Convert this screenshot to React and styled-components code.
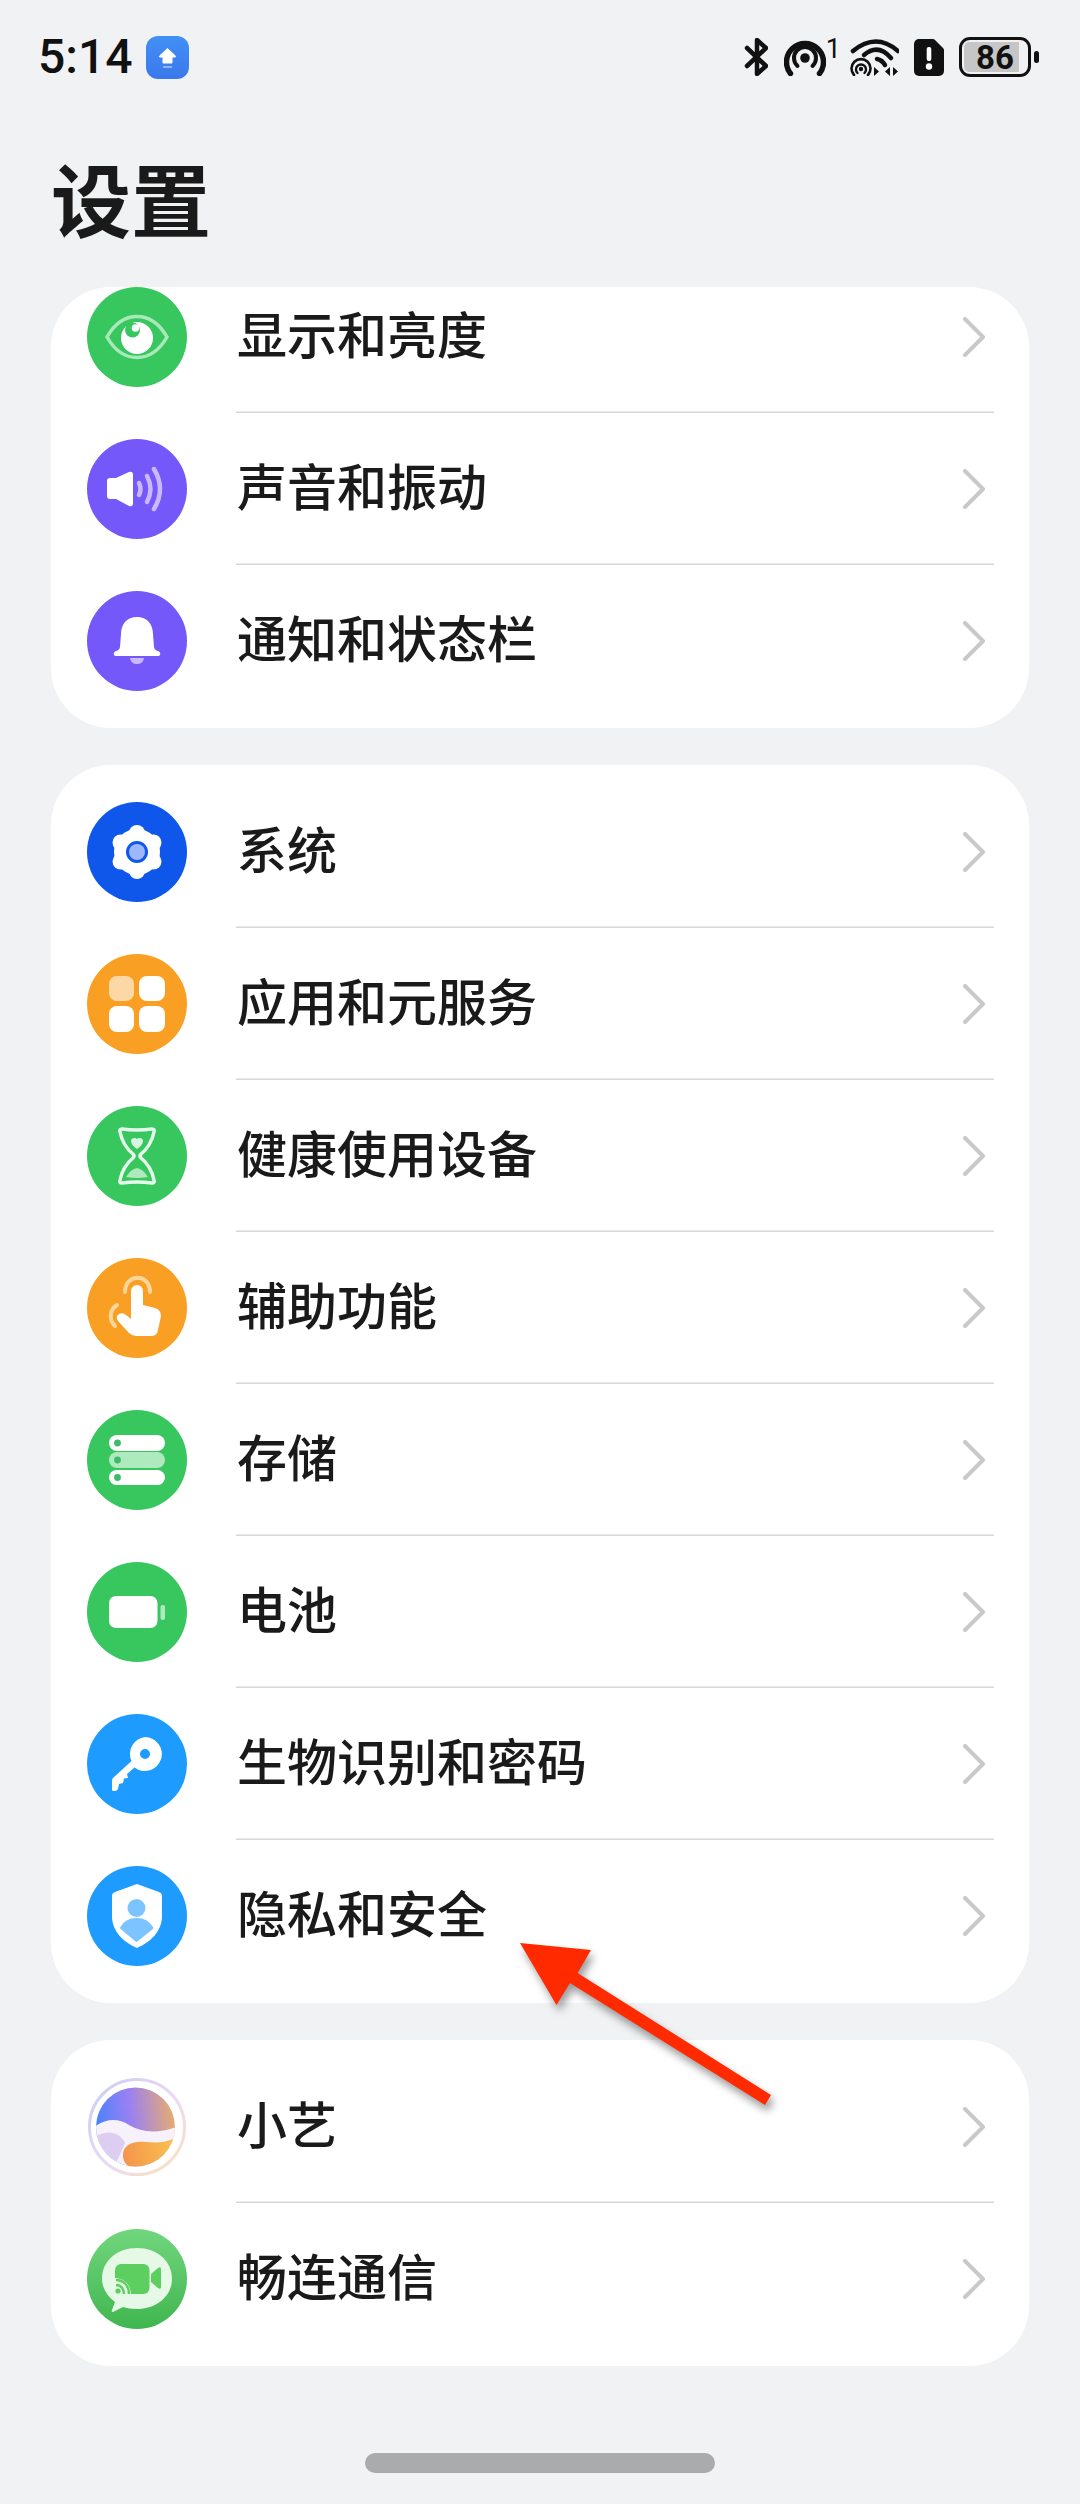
import styled, { createGlobalStyle } from "styled-components";

const GlobalStyle = createGlobalStyle`
  html, body {
    margin: 0;
    padding: 0;
    background: #f1f2f4;
  }
  * {
    box-sizing: border-box;
  }
`;

const GREEN = "#38c75e";
const PURPLE = "#7558fa";
const ORANGE = "#f9a024";
const SKY = "#1e9bff";

const Page = styled.div`
  position: relative;
  width: 1080px;
  height: 2504px;
  overflow: hidden;
  display: flex;
  flex-direction: column;
  background: #f1f2f4;
  font-family: "Noto Sans CJK SC", "Noto Sans", sans-serif;
  color: #1a1a1a;
`;

const StatusBar = styled.div`
  height: 114px;
  flex-shrink: 0;
  display: flex;
  align-items: center;
  justify-content: space-between;
  padding: 0 41px 0 38px;
`;

const StatusLeft = styled.div`
  display: flex;
  align-items: center;
  gap: 13px;
`;

const Time = styled.span`
  font-family: Roboto, "Liberation Sans", sans-serif;
  font-size: 48px;
  font-weight: 500;
  line-height: 56px;
  color: #111;
`;

const StatusRight = styled.div`
  display: flex;
  align-items: center;
  gap: 15px;
`;

const Hotspot = styled.div`
  display: flex;
  align-items: flex-start;
  gap: 4px;
  margin: 0 -3px 0 1px;
`;

const SimCount = styled.span`
  margin: 0 -4px;
  font-family: Roboto, "Liberation Sans", sans-serif;
  font-size: 27px;
  line-height: 22px;
  color: #111;
`;

const Battery = styled.div`
  display: flex;
  align-items: center;
  gap: 3px;
`;

const BatteryShell = styled.div`
  width: 72px;
  height: 40px;
  border: 3.5px solid #111;
  border-radius: 11px;
  padding: 2px;
  display: flex;
`;

const BatteryLevel = styled.div`
  flex: 1;
  display: flex;
  align-items: center;
  justify-content: center;
  background: linear-gradient(to right, #c6c6c6 89%, transparent 89%);
  border-radius: 5px;
  font-family: Roboto, "Liberation Sans", sans-serif;
  font-weight: 700;
  font-size: 33px;
  line-height: 1;
  color: #111;
`;

const BatteryNub = styled.div`
  width: 5px;
  height: 12px;
  border-radius: 3px;
  background: #111;
`;

const Title = styled.h1`
  margin: 0;
  height: 173px;
  flex-shrink: 0;
  padding-left: 51px;
  font-size: 80px;
  font-weight: 700;
  line-height: 165px;
  color: #1a1a1a;
`;

const Cards = styled.div`
  display: flex;
  flex-direction: column;
  gap: 37px;
  padding: 0 51px;
`;

const Card = styled.section`
  background: #fff;
  border-radius: 60px;
  overflow: hidden;
  padding: ${(p) => (p.$clipped ? "0 0 11px" : "11px 0")};
`;

const RowList = styled.div`
  display: flex;
  flex-direction: column;
  margin-top: ${(p) => (p.$clipped ? "-26px" : "0")};
`;

const Row = styled.div`
  height: 152px;
  display: flex;
  align-items: center;
  padding: 0 35px 0 36px;
`;

const Badge = styled.div`
  width: 100px;
  height: 100px;
  flex-shrink: 0;
  border-radius: 50%;
  background: ${(p) => p.$bg};

  svg {
    display: block;
  }
`;

const RowBody = styled.div`
  flex: 1;
  align-self: stretch;
  margin-left: 49px;
  padding-right: 8px;
  display: flex;
  align-items: center;
  justify-content: space-between;
  box-shadow: ${(p) => (p.$last ? "none" : "inset 0 -1.5px 0 #d6d6d6")};
`;

const Label = styled.span`
  margin: 0 0 10px 1px;
  font-size: 50px;
  font-weight: 500;
  line-height: 60px;
  color: #1a1a1a;
`;

const HomeBar = styled.div`
  width: 350px;
  height: 20px;
  margin: 87px auto 0;
  border-radius: 10px;
  background: #aaabad;
`;

const Arrow = styled.svg`
  position: absolute;
  left: 510px;
  top: 1930px;
  filter: drop-shadow(3px 6px 4px rgba(0, 0, 0, 0.4));
`;

const Icon = ({ children }) => (
  <svg width="100" height="100" viewBox="0 0 100 100">
    {children}
  </svg>
);

const EyeIcon = () => (
  <Icon>
    <path
      d="M20 50 C28 36 39 29.5 50 29.5 C61 29.5 72 36 80 50 C72 64 61 70.5 50 70.5 C39 70.5 28 64 20 50 Z"
      fill="none"
      stroke="#a8e9b9"
      strokeWidth="3.5"
    />
    <circle cx="50" cy="51" r="16" fill="#fff" />
    <circle cx="45.5" cy="43" r="7.5" fill={GREEN} />
    <circle cx="48.5" cy="41" r="3.8" fill="#fff" />
  </Icon>
);

const SoundIcon = () => (
  <Icon>
    <path
      d="M23 39 H29 L42 33 Q46 32 46 36 V64 Q46 68 42 67 L29 60 H23 Q20 60 20 57 V42 Q20 39 23 39 Z"
      fill="#fff"
    />
    <g fill="none" stroke="#c9baff" strokeWidth="4.5" strokeLinecap="round">
      <path d="M52 44 Q55 50 52 56" />
      <path d="M60 37 Q67 50 60 63" />
      <path d="M67 30 Q79 50 67 70" />
    </g>
  </Icon>
);

const BellIcon = () => (
  <Icon>
    <path d="M43 67 H57 Q56 73 50 73 Q44 73 43 67 Z" fill="#c9baff" />
    <path
      d="M50 26 C40 26 34 33 34 43 L33 56 Q32.5 59 29 60 Q26 61 27 64 Q27.5 65 29 65 H71 Q72.5 65 73 64 Q74 61 71 60 Q67.5 59 67 56 L66 43 C66 33 60 26 50 26 Z"
      fill="#fff"
    />
  </Icon>
);

const GearIcon = () => (
  <Icon>
    <circle cx="50" cy="50" r="23" fill="#fff" />
    {[0, 60, 120, 180, 240, 300].map((deg) => (
      <circle
        key={deg}
        cx={50 + 19 * Math.sin((deg * Math.PI) / 180)}
        cy={50 - 19 * Math.cos((deg * Math.PI) / 180)}
        r="8"
        fill="#fff"
      />
    ))}
    <circle cx="50" cy="50" r="11" fill="#0f57ea" />
    <circle cx="50" cy="50" r="8" fill="#9db8ff" />
  </Icon>
);

const AppsIcon = () => (
  <Icon>
    <rect x="22" y="22" width="25" height="25" rx="8" fill="#fcd8a6" />
    <rect x="52" y="22" width="26" height="25" rx="8" fill="#fff" />
    <rect x="22" y="52" width="25" height="26" rx="8" fill="#fff" />
    <rect x="52" y="52" width="26" height="26" rx="8" fill="#fff" />
  </Icon>
);

const HourglassIcon = () => (
  <Icon>
    <path
      d="M35 23 Q50 25 65 23 Q68 23 67 26 Q64 40 54 48 Q52 50 54 52 Q64 60 67 74 Q68 77 65 77 Q50 75 35 77 Q32 77 33 74 Q36 60 46 52 Q48 50 46 48 Q36 40 33 26 Q32 23 35 23 Z"
      fill="none"
      stroke="#e4f9e9"
      strokeWidth="3.5"
      strokeLinejoin="round"
    />
    <path
      d="M50 43 C46 40 44 38 44 35 C44 32 48 31 50 33 C52 31 56 32 56 35 C56 38 54 40 50 43 Z"
      fill="#d8f6df"
    />
    <path d="M39 71 Q44 63 50 62 Q56 63 61 71 Q50 73 39 71 Z" fill="#aee9bd" />
  </Icon>
);

const TouchIcon = () => (
  <Icon>
    <g fill="none" stroke="#fdd69b" strokeWidth="4" strokeLinecap="round">
      <path d="M38 34 C38 15 63 15 63 34" />
      <path d="M30 47 C22 52 22 62 28 68" />
    </g>
    <path
      d="M44 33 A6 6 0 0 1 56 33 V47 L68 50 Q74 52 74 58 L71 72 Q70 78 64 78 H49 Q45 78 42 75 L31 63 Q28 59 32 56 Q36 54 39 57 L44 61 Z"
      fill="#fff"
    />
  </Icon>
);

const StorageIcon = () => (
  <Icon>
    <rect x="22" y="25" width="56" height="16" rx="8" fill="#fff" />
    <rect x="22" y="42" width="56" height="16" rx="8" fill="#aeeabd" />
    <rect x="22" y="60" width="56" height="15" rx="7.5" fill="#fff" />
    <circle cx="30.5" cy="33" r="3.4" fill="#3fb96b" />
    <circle cx="30.5" cy="50" r="3.4" fill="#3fb96b" />
    <circle cx="30.5" cy="67.5" r="3.4" fill="#3fb96b" />
  </Icon>
);

const BatteryIcon = () => (
  <Icon>
    <rect x="22" y="34" width="48.5" height="32" rx="7" fill="#fff" />
    <rect x="73.5" y="43" width="4.5" height="15" rx="2" fill="#aeeabd" />
  </Icon>
);

const KeyIcon = () => (
  <Icon>
    <path
      fillRule="evenodd"
      d="M58 23 A17 17 0 1 1 47.5 53.5 L40 60 L41 64 L37 64.5 L36 69 L32 70 L31 75 Q30 77 28 77 H26 Q25 77 25 75 V67 Q25 65 26 64 L44.5 47 A17 17 0 0 1 58 23 Z M58 35 A5 5 0 1 0 58 45 A5 5 0 1 0 58 35 Z"
      fill="#fff"
    />
  </Icon>
);

const ShieldIcon = () => (
  <Icon>
    <path
      d="M50 18 L72 26 Q75 27 75 30 V50 C75 65 64 76 50 82 C36 76 25 65 25 50 V30 Q25 27 28 26 Z"
      fill="#fff"
    />
    <circle cx="49.5" cy="42" r="9" fill="#7cc4ff" />
    <path
      d="M34 62 C37 56 43 53 49.5 53 C56 53 62 56 65.5 62 L49.5 75 Z"
      fill="#7cc4ff"
      stroke="#7cc4ff"
      strokeWidth="2"
      strokeLinejoin="round"
    />
  </Icon>
);

const XiaoyiIcon = () => (
  <Icon>
    <defs>
      <linearGradient id="yiRing" x1="0" y1="0" x2="1" y2="1">
        <stop offset="0" stopColor="#c8cdf4" />
        <stop offset="0.55" stopColor="#ecd8f5" />
        <stop offset="1" stopColor="#fae4b6" />
      </linearGradient>
      <linearGradient id="yiTop" x1="0.05" y1="0.6" x2="0.95" y2="0.5">
        <stop offset="0" stopColor="#3f82ff" />
        <stop offset="0.45" stopColor="#9a80f2" />
        <stop offset="1" stopColor="#f2b25e" />
      </linearGradient>
      <linearGradient id="yiBlob" x1="0" y1="0.5" x2="1" y2="0.4">
        <stop offset="0" stopColor="#f5954c" />
        <stop offset="1" stopColor="#f8c24f" />
      </linearGradient>
      <clipPath id="yiClip">
        <circle cx="48.5" cy="50" r="39.5" />
      </clipPath>
    </defs>
    <circle cx="50" cy="50" r="47.5" fill="#fff" stroke="url(#yiRing)" strokeWidth="3" />
    <g clipPath="url(#yiClip)">
      <rect x="0" y="0" width="100" height="100" fill="url(#yiTop)" />
      <path
        d="M5 52 C16 42 30 40 42 48 C55 56 72 57 92 49 V70 L60 100 H5 Z"
        fill="#f6f1fb"
      />
      <path d="M5 62 C18 52 32 54 38 66 L30 84 L5 80 Z" fill="#ddcdf0" />
      <path
        d="M36 78 C36 68 46 64 58 65 C70 66 80 66 90 60 C88 78 70 95 48 92 C40 90 36 85 36 78 Z"
        fill="url(#yiBlob)"
      />
    </g>
  </Icon>
);

const MeetimeIcon = () => (
  <Icon>
    <defs>
      <linearGradient id="meetBg" x1="0" y1="0" x2="0" y2="1">
        <stop offset="0" stopColor="#71d67d" />
        <stop offset="1" stopColor="#3fb64f" />
      </linearGradient>
    </defs>
    <circle cx="50" cy="50" r="50" fill="url(#meetBg)" />
    <path
      d="M50 19 C70 19 85 32 85 49.5 C85 67 70 80 50 80 C44 80 40 79 36 78 L26 83 Q24 83 25 81 L28 73 C20 67 15 59 15 49.5 C15 32 30 19 50 19 Z"
      fill="#e6f9e6"
    />
    <rect x="28" y="35" width="34.5" height="30" rx="6" fill="#5ccf60" />
    <path d="M64 45 L71 39 Q74 37 74 40 V58 Q74 61 71 59 L64 53 Z" fill="#5ccf60" />
    <path d="M28 49 C37 49 44 56 44 66 H28 Z" fill="#e6f9e6" />
    <circle cx="31" cy="62" r="2.6" fill="#5ccf60" />
    <g fill="none" stroke="#5ccf60" strokeWidth="2.4">
      <path d="M29 56 C34 56 37 60 37 65" />
      <path d="M29 51 C37 51 42 57 42 65" />
    </g>
  </Icon>
);

const Chevron = () => (
  <svg width="24" height="40" viewBox="0 0 24 40">
    <path
      d="M3 2 L21 20 L3 38"
      fill="none"
      stroke="#c9c9c9"
      strokeWidth="4"
      strokeLinecap="round"
      strokeLinejoin="round"
    />
  </svg>
);

const groups = [
  [
    { label: "显示和亮度", bg: GREEN, icon: EyeIcon },
    { label: "声音和振动", bg: PURPLE, icon: SoundIcon },
    { label: "通知和状态栏", bg: PURPLE, icon: BellIcon },
  ],
  [
    { label: "系统", bg: "#0f57ea", icon: GearIcon },
    { label: "应用和元服务", bg: ORANGE, icon: AppsIcon },
    { label: "健康使用设备", bg: GREEN, icon: HourglassIcon },
    { label: "辅助功能", bg: ORANGE, icon: TouchIcon },
    { label: "存储", bg: GREEN, icon: StorageIcon },
    { label: "电池", bg: GREEN, icon: BatteryIcon },
    { label: "生物识别和密码", bg: SKY, icon: KeyIcon },
    { label: "隐私和安全", bg: SKY, icon: ShieldIcon },
  ],
  [
    { label: "小艺", bg: "#fff", icon: XiaoyiIcon },
    { label: "畅连通信", bg: "#fff", icon: MeetimeIcon },
  ],
];

function App() {
  return (
    <Page>
      <GlobalStyle />
      <StatusBar>
        <StatusLeft>
          <Time>5:14</Time>
          <svg width="43" height="43" viewBox="0 0 43 43">
            <defs>
              <linearGradient id="upBg" x1="0" y1="0" x2="0" y2="1">
                <stop offset="0" stopColor="#4290f5" />
                <stop offset="1" stopColor="#3a78ec" />
              </linearGradient>
            </defs>
            <rect width="43" height="43" rx="12" fill="url(#upBg)" />
            <path
              d="M21.5 12.5 L29.5 20 Q30 21 29 21 H26 V27 H17 V21 H14 Q13 21 13.5 20 Z"
              fill="#fff"
              stroke="#fff"
              strokeLinejoin="round"
            />
            <path d="M17 31 H26" stroke="#a9c9fa" strokeWidth="1.5" />
          </svg>
        </StatusLeft>
        <StatusRight>
          <svg width="24" height="38" viewBox="0 0 24 38">
            <path
              d="M3 10 L22 28 L13 36 V2 L22 10 L3 28"
              fill="none"
              stroke="#111"
              strokeWidth="4.5"
              strokeLinecap="round"
              strokeLinejoin="round"
            />
          </svg>
          <Hotspot>
            <svg width="42" height="38" viewBox="0 0 42 38">
              <circle cx="21" cy="20" r="4.8" fill="#111" />
              <g fill="none" stroke="#111" strokeLinecap="round">
                <path d="M13.5 28 A11 11 0 1 1 28.5 28" strokeWidth="4" />
                <path d="M6.5 35.5 A18.5 18.5 0 1 1 35.5 35.5" strokeWidth="5.5" />
              </g>
            </svg>
            <SimCount>1</SimCount>
          </Hotspot>
          <svg width="50" height="38" viewBox="0 0 50 38">
            <g fill="none" stroke="#111" strokeLinecap="round">
              <path d="M4 13 Q27 -6 49 13" strokeWidth="4.5" />
              <path d="M15 17 Q29 5 42 20" strokeWidth="4.5" />
              <path d="M28 21 Q33 22 36 27" strokeWidth="4.5" />
              <path d="M5 37 A9.5 9.5 0 1 1 19 37" strokeWidth="2.6" />
              <path d="M8.5 35 A5 5 0 1 1 15.5 35" strokeWidth="2.4" />
            </g>
            <circle cx="12" cy="31" r="2.2" fill="#111" />
            <path d="M25 29 L30 33.5 L25 38 Z M41 29 L36 33.5 L41 38 Z M44 29 L49 33.5 L44 38 Z" fill="#111" />
          </svg>
          <svg width="30" height="37" viewBox="0 0 30 37">
            <path
              d="M5 0 H19 Q20 0 21 1 L29 9 Q30 10 30 11 V32 A5 5 0 0 1 25 37 H5 A5 5 0 0 1 0 32 V5 A5 5 0 0 1 5 0 Z"
              fill="#111"
            />
            <rect x="12.7" y="8" width="4.6" height="14" rx="2" fill="#fff" />
            <circle cx="15" cy="27.5" r="3.2" fill="#fff" />
          </svg>
          <Battery>
            <BatteryShell>
              <BatteryLevel>86</BatteryLevel>
            </BatteryShell>
            <BatteryNub />
          </Battery>
        </StatusRight>
      </StatusBar>
      <Title>设置</Title>
      <Cards>
        {groups.map((rows, g) => (
          <Card key={g} $clipped={g === 0}>
            <RowList $clipped={g === 0}>
              {rows.map((row, i) => (
                <Row key={row.label}>
                  <Badge $bg={row.bg}>
                    <row.icon />
                  </Badge>
                  <RowBody $last={i === rows.length - 1}>
                    <Label>{row.label}</Label>
                    <Chevron />
                  </RowBody>
                </Row>
              ))}
            </RowList>
          </Card>
        ))}
      </Cards>
      <HomeBar />
      <Arrow width="280" height="190" viewBox="510 1930 280 190">
        <polygon
          points="520,1943 591,1950 577.6,1973 771,2095 765,2105 570,1983 556.5,2005"
          fill="#ff2a00"
        />
      </Arrow>
    </Page>
  );
}

export default App;
